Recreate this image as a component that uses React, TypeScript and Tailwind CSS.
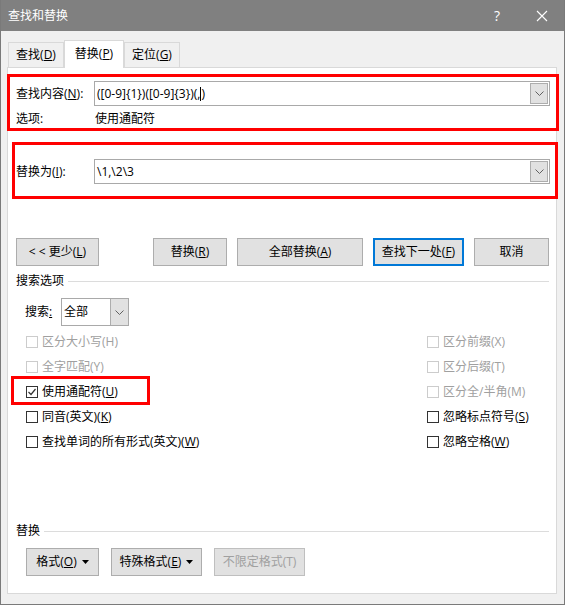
import React from "react";

const font = "font-['Segoe_UI','Open_Sans','Noto_Sans_CJK_SC',sans-serif]";

function Chevron() {
  return (
    <svg width="9" height="5" viewBox="0 0 9 5" className="block">
      <polyline points="0.5,0.5 4.5,4.5 8.5,0.5" fill="none" stroke="#606060" strokeWidth="1" />
    </svg>
  );
}

function Caret() {
  return (
    <svg width="7" height="4" viewBox="0 0 7 4" className="ml-[5px] block">
      <polygon points="0,0 7,0 3.5,4" fill="#000" />
    </svg>
  );
}

function Combo({ value, caret }: { value: string; caret?: boolean }) {
  return (
    <div className="flex h-[25px] w-[456px] border border-[#a9a9a9] bg-white">
      <div className="flex flex-1 items-center pl-[2px] text-[12px] text-black">
        {value}
        {caret && <span className="inline-block h-[14px] w-px bg-black" />}
        {caret && ")"}
      </div>
      <div className="my-px mr-px flex w-[18px] items-center justify-center border border-[#adadad] bg-[#e1e1e1]">
        <Chevron />
      </div>
    </div>
  );
}

function Btn({
  w,
  children,
  primary,
  disabled,
  className = "",
}: {
  w: string;
  children: React.ReactNode;
  primary?: boolean;
  disabled?: boolean;
  className?: string;
}) {
  return (
    <div
      className={`${w} ${className} flex h-[28px] items-center justify-center bg-[#e1e1e1] text-[12px] ${
        primary ? "border-2 border-[#0078d7]" : disabled ? "border border-[#bfbfbf]" : "border border-[#adadad]"
      } ${disabled ? "text-[#a0a0a0]" : "text-black"}`}
    >
      {children}
    </div>
  );
}

function Check({ checked, disabled, children }: { checked?: boolean; disabled?: boolean; children: React.ReactNode }) {
  return (
    <div className="flex h-[25px] items-center">
      <div
        className={`flex h-[12px] w-[12px] items-center justify-center border bg-white ${
          disabled ? "border-[#cccccc]" : "border-[#333333]"
        }`}
      >
        {checked && (
          <svg width="10" height="10" viewBox="0 0 10 10">
            <polyline points="1.5,5 4,7.5 8.5,2" fill="none" stroke="#333" strokeWidth="1.2" />
          </svg>
        )}
      </div>
      <span className={`ml-[4px] text-[12px] ${disabled ? "text-[#a0a0a0]" : "text-black"}`}>{children}</span>
    </div>
  );
}

export default function App() {
  return (
    <div className={`flex h-[605px] w-[565px] flex-col border-x border-b border-[#7a7a7a] bg-[#f0f0f0] ${font}`}>
      {/* title bar */}
      <div className="flex h-[31px] shrink-0 items-center bg-[#808080] pl-[7px] text-[12px] text-white">
        <span>查找和替换</span>
        <span className="ml-auto text-[14px]">?</span>
        <svg width="12" height="12" viewBox="0 0 12 12" className="ml-[36px] mr-[16px]">
          <path d="M1 1L11 11M11 1L1 11" stroke="#fff" strokeWidth="1.1" />
        </svg>
      </div>

      {/* tabs */}
      <div className="mt-[9px] flex h-[27px] items-end pl-[7px] text-[12px] text-black">
        <div className="flex h-[25px] w-[56px] items-center justify-center border border-b-0 border-[#d9d9d9]">
          查找(<u>D</u>)
        </div>
        <div className="relative z-10 -mb-px flex h-[28px] w-[60px] items-center justify-center border border-b-0 border-[#d9d9d9] bg-white pb-[2px]">
          替换(<u>P</u>)
        </div>
        <div className="flex h-[25px] w-[56px] items-center justify-center border border-b-0 border-[#d9d9d9]">
          定位(<u>G</u>)
        </div>
      </div>

      {/* panel */}
      <div className="ml-[6px] h-[527px] w-[550px] border border-[#d9d9d9] bg-white text-[12px] text-black">
        {/* find box */}
        <div className="-ml-px mt-[6px] h-[57px] w-[552px] border-[3px] border-[#ff0000] pl-[6px] pt-[4px]">
          <div className="flex items-center">
            <span className="w-[78px]">
              查找内容(<u>N</u>):
            </span>
            <Combo value="([0-9]{1})([0-9]{3})(," caret />
          </div>
          <div className="mt-[4px] flex items-center">
            <span className="w-[79px]">选项:</span>
            <span>使用通配符</span>
          </div>
        </div>

        {/* replace box */}
        <div className="ml-[4px] mt-[11px] h-[57px] w-[546px] border-[3px] border-[#ff0000] pl-[1px] pt-[14px]">
          <div className="flex items-center">
            <span className="w-[78px]">
              替换为(<u>I</u>):
            </span>
            <Combo value="\1,\2\3" />
          </div>
        </div>

        {/* buttons */}
        <div className="mt-[39px] flex pl-[8px]">
          <Btn w="w-[83px]">
            &lt; &lt; 更少(<u>L</u>)
          </Btn>
          <Btn w="w-[74px]" className="ml-[54px]">
            替换(<u>R</u>)
          </Btn>
          <Btn w="w-[126px]" className="ml-[10px]">
            全部替换(<u>A</u>)
          </Btn>
          <Btn w="w-[91px]" className="ml-[10px]" primary>
            查找下一处(<u>F</u>)
          </Btn>
          <Btn w="w-[75px]" className="ml-[10px]">
            取消
          </Btn>
        </div>

        {/* search options */}
        <div className="mt-[7px] flex h-[16px] items-center pl-[8px] pr-[7px]">
          <span>搜索选项</span>
          <div className="ml-[4px] h-px flex-1 bg-[#dcdcdc]" />
        </div>

        <div className="mt-[9px] flex items-center pl-[17px]">
          <span className="w-[36px]">
            搜索<u>:</u>
          </span>
          <div className="flex h-[28px] w-[68px] border border-[#a9a9a9] bg-white">
            <div className="flex flex-1 items-center pl-[2px]">全部</div>
            <div className="flex w-[18px] items-center justify-center border-l border-[#adadad] bg-[#e1e1e1]">
              <Chevron />
            </div>
          </div>
        </div>

        <div className="mt-[3px] flex">
          <div className="w-[419px] pl-[18px]">
            <Check disabled>区分大小写(H)</Check>
            <Check disabled>全字匹配(Y)</Check>
            <div className="relative">
              <Check checked>
                使用通配符(<u>U</u>)
              </Check>
              <div className="absolute left-[-15px] top-[-3px] h-[29px] w-[139px] border-[3px] border-[#ff0000]" />
            </div>
            <Check>
              同音(英文)(<u>K</u>)
            </Check>
            <Check>
              查找单词的所有形式(英文)(<u>W</u>)
            </Check>
          </div>
          <div>
            <Check disabled>区分前缀(X)</Check>
            <Check disabled>区分后缀(T)</Check>
            <Check disabled>区分全/半角(M)</Check>
            <Check>
              忽略标点符号(<u>S</u>)
            </Check>
            <Check>
              忽略空格(<u>W</u>)
            </Check>
          </div>
        </div>

        {/* replace section */}
        <div className="mt-[69px] flex h-[16px] items-center pl-[8px] pr-[7px]">
          <span>替换</span>
          <div className="ml-[4px] h-px flex-1 bg-[#dcdcdc]" />
        </div>
        <div className="mt-[9px] flex pl-[18px]">
          <Btn w="w-[73px]">
            格式(<u>O</u>)
            <Caret />
          </Btn>
          <Btn w="w-[91px]" className="ml-[12px]">
            特殊格式(<u>E</u>)
            <Caret />
          </Btn>
          <Btn w="w-[91px]" className="ml-[12px]" disabled>
            不限定格式(T)
          </Btn>
        </div>
      </div>
    </div>
  );
}
